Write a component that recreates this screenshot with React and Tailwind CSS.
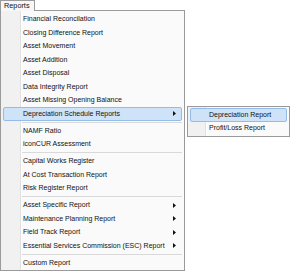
import React from "react";

const groups = [
  [
    ["Financial Reconcilation"],
    ["Closing Difference Report"],
    ["Asset Movement"],
    ["Asset Addition"],
    ["Asset Disposal"],
    ["Data Integrity Report"],
    ["Asset Missing Opening Balance"],
    ["Depreciation Schedule Reports", true, true],
  ],
  [["NAMF Ratio"], ["iconCUR Assessment"]],
  [["Capital Works Register"], ["At Cost Transaction Report"], ["Risk Register Report"]],
  [
    ["Asset Specific Report", true],
    ["Maintenance Planning Report", true],
    ["Field Track Report", true],
    ["Essential Services Commission (ESC) Report", true],
  ],
  [["Custom Report"]],
];

function Arrow() {
  return (
    <svg width="3" height="5" viewBox="0 0 3 5" className="mr-[5px] shrink-0">
      <path d="M0 0 L3 2.5 L0 5 Z" fill="#111" />
    </svg>
  );
}

function Item({ label, sub, active }) {
  return (
    <div
      className={
        "flex h-[13.5px] items-center mx-[2px] pl-[19px] rounded-[2px] border " +
        (active ? "border-[#93bde8] bg-[#cfe3f8]" : "border-transparent")
      }
    >
      <span className="flex-1 whitespace-nowrap">{label}</span>
      {sub && <Arrow />}
    </div>
  );
}

function Sep() {
  return (
    <div className="h-[3.5px] flex items-center pl-[21px] pr-[2px]">
      <div className="h-px w-full bg-[#d9d9d9]" />
    </div>
  );
}

export default function App() {
  return (
    <div
      className="relative w-[296px] h-[271px] overflow-hidden bg-white text-[7px] text-[#111]"
      style={{ fontFamily: '"Liberation Sans", Arial, sans-serif' }}
    >
      <div className="flex h-[11px]">
        <div className="relative z-10 h-[11px] w-[35px] border border-b-0 border-[#9a9a9a] bg-[#f7f7f7] pl-[3px] text-[7.3px] leading-[10px]">
          Reports
        </div>
      </div>
      <div className="-mt-px w-[185px] border border-[#9a9a9a] pt-[1.5px] bg-[linear-gradient(to_right,#f1f1f1_19px,#e0e0e0_19px,#e0e0e0_20px,#ffffff_20px,#ffffff_21px,#fafafa_21px)]">
        {groups.map((g, gi) => (
          <React.Fragment key={gi}>
            {gi > 0 && <Sep />}
            {g.map(([label, sub, active]) => (
              <Item key={label} label={label} sub={sub} active={active} />
            ))}
          </React.Fragment>
        ))}
      </div>
      <div className="absolute left-[187px] top-[106px] w-[103px] border border-[#9a9a9a] py-[1px] bg-[linear-gradient(to_right,#f1f1f1_17px,#e0e0e0_17px,#e0e0e0_18px,#ffffff_18px,#ffffff_19px,#fafafa_19px)]">
        <div className="flex h-[13.5px] items-center mx-[2px] pl-[18px] rounded-[2px] border border-[#93bde8] bg-[#cfe3f8] whitespace-nowrap">
          Depreciation Report
        </div>
        <div className="flex h-[13.5px] items-center mx-[2px] pl-[18px] border border-transparent whitespace-nowrap">
          Profit/Loss Report
        </div>
      </div>
    </div>
  );
}
